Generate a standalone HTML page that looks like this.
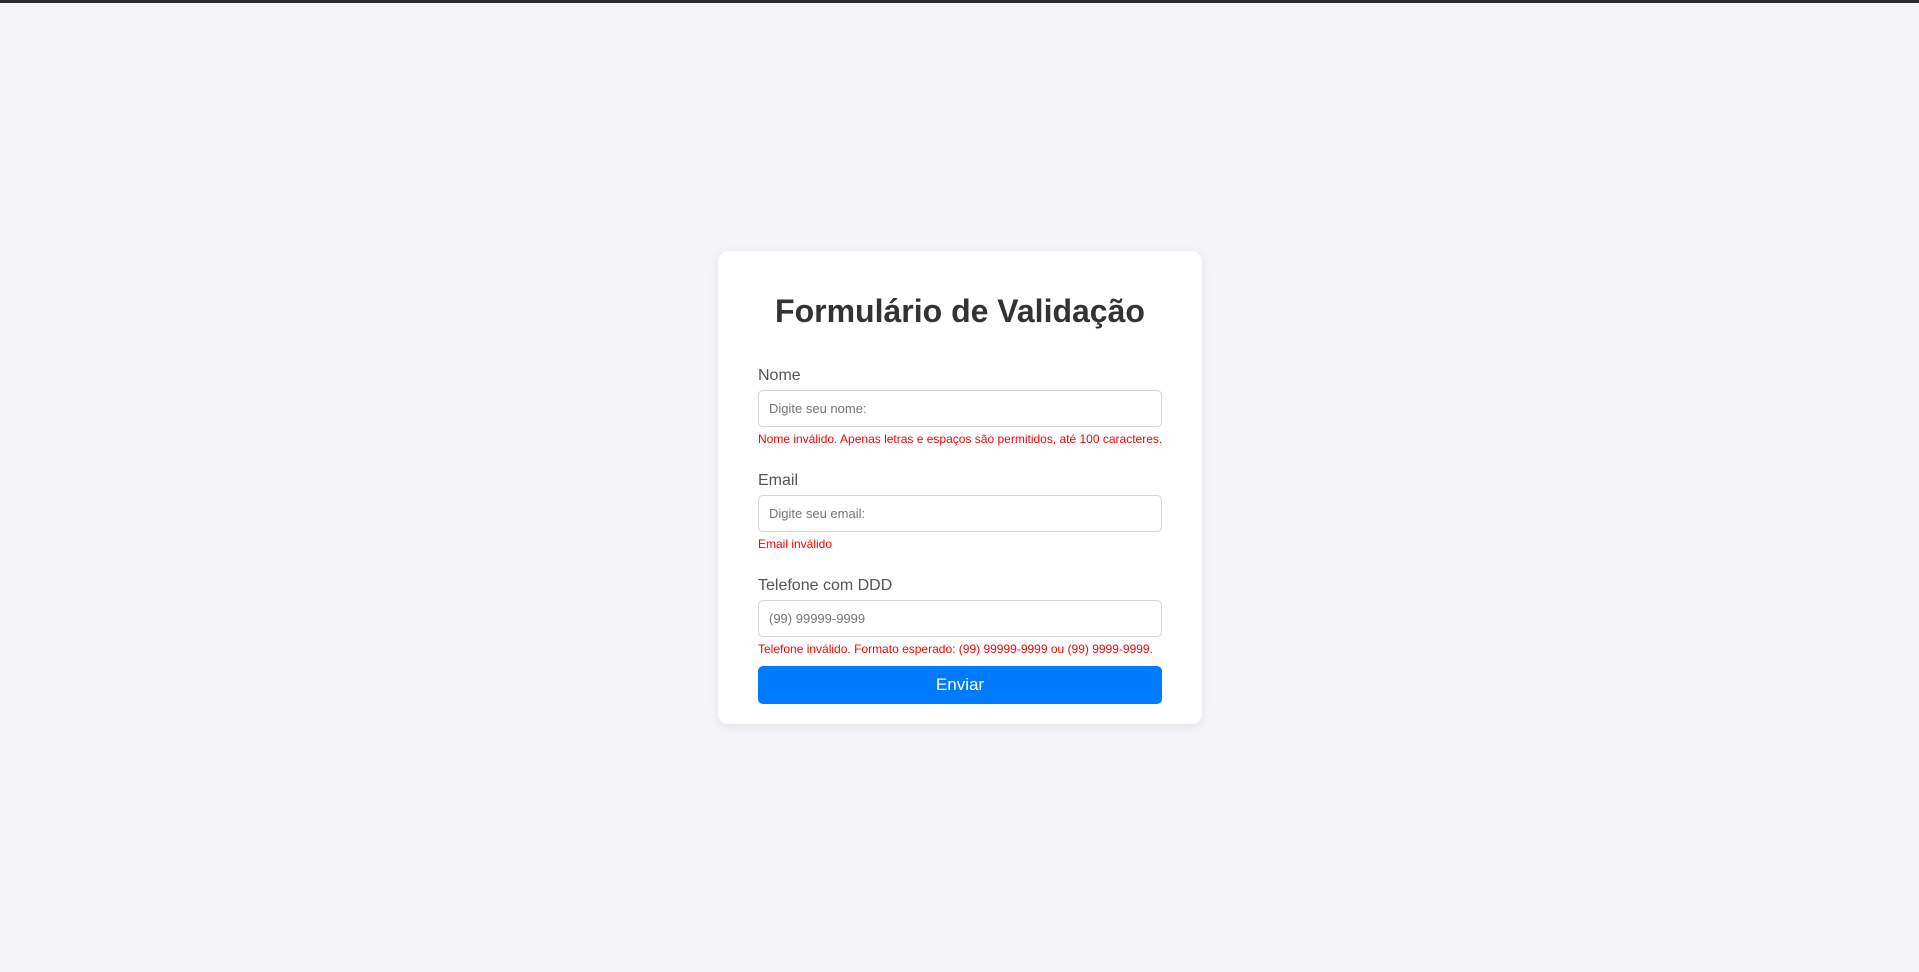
<!DOCTYPE html>
<html><head><meta charset="utf-8"><style>
*{box-sizing:border-box;margin:0;padding:0}
body{width:1919px;height:972px;background:#f4f4f9;font-family:"Liberation Sans",Arial,sans-serif;position:relative;overflow:hidden}
.bar{position:absolute;left:0;top:0;width:1919px;height:3px;background:#2b2b2b}
.card{position:absolute;left:718px;top:251px;width:484px;height:473px;background:#fff;border-radius:10px;box-shadow:0 2px 10px rgba(0,0,0,0.08)}
.a{position:absolute;left:40px}
h1{position:absolute;left:0;width:484px;text-align:center;top:40px;font-size:32px;font-weight:bold;color:#333;line-height:40px}
.lbl{font-size:16px;color:#555;line-height:20px}
.in{width:404px;height:37px;border:1px solid #d6d6d6;border-radius:5px;font-size:13px;color:#757575;padding-left:10px;line-height:35px}
.err{font-size:12px;color:#f00;line-height:14px}
.btn{width:404px;height:38px;background:#007bff;border-radius:5px;color:#fff;font-size:17px;text-align:center;line-height:38px}
</style></head><body>
<div class="bar"></div>
<div class="card">
<h1>Formulário de Validação</h1>
<div class="a lbl" style="top:115px">Nome</div>
<div class="a in" style="top:139px">Digite seu nome:</div>
<div class="a err" style="top:181px">Nome inválido. Apenas letras e espaços são permitidos, até 100 caracteres.</div>
<div class="a lbl" style="top:220px">Email</div>
<div class="a in" style="top:244px">Digite seu email:</div>
<div class="a err" style="top:286px">Email inválido</div>
<div class="a lbl" style="top:325px">Telefone com DDD</div>
<div class="a in" style="top:349px">(99) 99999-9999</div>
<div class="a err" style="top:391px">Telefone inválido. Formato esperado: (99) 99999-9999 ou (99) 9999-9999.</div>
<div class="a btn" style="top:415px">Enviar</div>
</div>
</body></html>
